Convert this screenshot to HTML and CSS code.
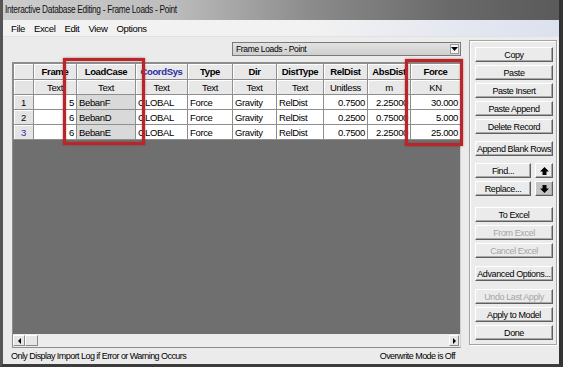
FILE: index.html
```html
<!DOCTYPE html>
<html lang="en">
<head>
  <meta charset="utf-8">
  <title>Interactive Database Editing - Frame Loads - Point</title>
  <link rel="stylesheet" href="styles.css">
</head>
<body>
  <div class="window">
    <div class="titlebar"><span class="title-text">Interactive Database Editing - Frame Loads - Point</span></div>
    <ul class="menubar">
      <li>File</li>
      <li>Excel</li>
      <li>Edit</li>
      <li>View</li>
      <li>Options</li>
    </ul>
    <div class="main">
      <div class="left">
        <div class="toolbar">
          <div class="combo">
            <span class="combo-text">Frame Loads - Point</span>
            <span class="combo-btn">
              <svg width="7" height="4" viewBox="0 0 7 4"><path d="M0 0H7L3.5 4Z" fill="#000"/></svg>
            </span>
          </div>
        </div>
        <div class="grid-box">
          <table class="grid">
            <colgroup>
              <col style="width:20px"><col style="width:43px"><col style="width:59px"><col style="width:52px"><col style="width:45px">
              <col style="width:44px"><col style="width:47px"><col style="width:44px"><col style="width:43px"><col style="width:50px">
            </colgroup>
            <tr class="head">
              <th class="corner"></th><th>Frame</th><th>LoadCase</th><th class="key">CoordSys</th><th>Type</th>
              <th>Dir</th><th>DistType</th><th>RelDist</th><th>AbsDist</th><th>Force</th>
            </tr>
            <tr class="units">
              <th class="corner"></th><td>Text</td><td>Text</td><td>Text</td><td>Text</td>
              <td>Text</td><td>Text</td><td>Unitless</td><td>m</td><td>KN</td>
            </tr>
            <tr>
              <th class="rownum">1</th><td class="num">5</td><td class="sel">BebanF</td><td>GLOBAL</td><td>Force</td>
              <td>Gravity</td><td>RelDist</td><td class="num">0.7500</td><td class="num">2.25000</td><td class="num">30.000</td>
            </tr>
            <tr>
              <th class="rownum">2</th><td class="num">6</td><td class="sel">BebanD</td><td>GLOBAL</td><td>Force</td>
              <td>Gravity</td><td>RelDist</td><td class="num">0.2500</td><td class="num">0.75000</td><td class="num">5.000</td>
            </tr>
            <tr>
              <th class="rownum current">3</th><td class="num">6</td><td class="sel">BebanE</td><td>GLOBAL</td><td>Force</td>
              <td>Gravity</td><td>RelDist</td><td class="num">0.7500</td><td class="num">2.25000</td><td class="num">25.000</td>
            </tr>
          </table>
          <div class="grid-empty"></div>
          <div class="hscroll">
            <span class="sb-btn">
              <svg width="3" height="6" viewBox="0 0 3 6"><path d="M3 0V6L0 3Z" fill="#000"/></svg>
            </span>
            <span class="sb-thumb"></span>
            <span class="sb-track"></span>
            <span class="sb-btn">
              <svg width="3" height="6" viewBox="0 0 3 6"><path d="M0 0V6L3 3Z" fill="#000"/></svg>
            </span>
          </div>
        </div>
      </div>
      <div class="panel">
        <button class="btn">Copy</button>
        <button class="btn">Paste</button>
        <button class="btn">Paste Insert</button>
        <button class="btn">Paste Append</button>
        <button class="btn">Delete Record</button>
        <button class="btn gap-7">Append Blank Rows</button>
        <div class="btn-row gap-7">
          <button class="btn find">Find...</button>
          <button class="btn arrow">
            <svg width="9" height="8" viewBox="0 0 9 8"><path d="M4.5 0L9 4.5H6.5V8H2.5V4.5H0Z" fill="#000"/></svg>
          </button>
        </div>
        <div class="btn-row">
          <button class="btn find">Replace...</button>
          <button class="btn arrow down">
            <svg width="9" height="8" viewBox="0 0 9 8"><path d="M4.5 8L9 3.5H6.5V0H2.5V3.5H0Z" fill="#000"/></svg>
          </button>
        </div>
        <button class="btn gap-11">To Excel</button>
        <button class="btn" disabled>From Excel</button>
        <button class="btn" disabled>Cancel Excel</button>
        <button class="btn gap-8">Advanced Options...</button>
        <button class="btn gap-8" disabled>Undo Last Apply</button>
        <button class="btn">Apply to Model</button>
        <button class="btn">Done</button>
      </div>
    </div>
    <div class="statusbar">
      <span>Only Display Import Log if Error or Warning Occurs</span>
      <span class="mode">Overwrite Mode is Off</span>
    </div>
    <div class="mark mark-loadcase"></div>
    <div class="mark mark-force"></div>
  </div>
</body>
</html>
```

FILE: styles.css
```css
*, *::before, *::after {
  margin: 0;
  padding: 0;
  box-sizing: border-box;
}

body {
  background-color: #FFFFFF;
  color: #000000;
  font-family: "Liberation Sans", Arial, sans-serif;
  font-size: 9px;
  letter-spacing: -0.35px;
}

.window {
  position: relative;
  display: flex;
  flex-direction: column;
  width: 563px;
  height: 367px;
  border-left: 3px solid #555555;
  border-right: 4px solid #333333;
  border-bottom: 3px solid #3C3C3C;
  background-color: #EBEBEB;
}

.titlebar {
  height: 20px;
  padding: 4px 0 0 2px;
  background: linear-gradient(90deg, #CDCDCD 0%, #BDBDBD 30%, #8C8C8C 55%, #6A6A6A 80%, #5A5A5A 100%);
  font-size: 10px;
  color: #111111;
}

.title-text {
  display: inline-block;
  transform: scaleX(0.83);
  transform-origin: left center;
  white-space: nowrap;
}

.menubar {
  display: flex;
  height: 17px;
  padding: 3px 0 0 8px;
  list-style: none;
  background: linear-gradient(90deg, #F2F2F2 55%, #DCE1EF 100%);
  border-bottom: 1px solid #E2E2E2;
  font-size: 9.5px;
}

.menubar li {
  margin-right: 9px;
}

.main {
  display: flex;
  height: 311px;
  padding-left: 9px;
}

.left {
  display: flex;
  flex-direction: column;
  width: 449px;
}

.toolbar {
  display: flex;
  justify-content: flex-end;
  padding-top: 5px;
  height: 25px;
}

.combo {
  display: flex;
  align-items: center;
  width: 229px;
  height: 14px;
  border: 1px solid #7A7A7A;
  background: linear-gradient(#E2E2E2, #CFCFCF);
  font-size: 8.5px;
}

.combo-text {
  flex: 1;
  padding-left: 3px;
}

.combo-btn {
  display: flex;
  align-items: center;
  justify-content: center;
  width: 9px;
  height: 10px;
  margin-right: 1px;
  background-color: #F4F4F4;
  border: 1px solid #9A9A9A;
}

.grid-box {
  display: flex;
  flex-direction: column;
  height: 286px;
  border: 1px solid #8C8C8C;
  border-right-color: #D0D0D0;
  overflow: hidden;
}

.grid {
  border-collapse: collapse;
  table-layout: fixed;
  width: 447px;
  background-color: #FFFFFF;
  font-size: 9.5px;
}

.grid th,
.grid td {
  height: 15px;
  padding: 0 2px;
  border: 1px solid #8E8E8E;
  font-weight: normal;
  white-space: nowrap;
  overflow: hidden;
}

.grid .head th {
  height: 16px;
  font-weight: bold;
  background-color: #E8E8E8;
  box-shadow: inset 1px 1px #FFFFFF;
}

.grid .head .key {
  color: #2B2BA6;
}

.grid .units td {
  text-align: center;
  background-color: #E8E8E8;
  box-shadow: inset 1px 1px #FFFFFF;
}

.grid .corner,
.grid .rownum {
  background-color: #E4E4E4;
  box-shadow: inset 1px 1px #FFFFFF;
  text-align: center;
}

.grid .current {
  color: #2B2BA6;
}

.grid .num {
  text-align: right;
}

.grid .sel {
  background-color: #D9D9D9;
}

.grid-empty {
  flex: 1;
  background-color: #6F6F6F;
}

.hscroll {
  display: flex;
  height: 13px;
  padding: 1px 0 1px 0;
  background-color: #ECECEC;
}

.sb-btn,
.sb-thumb {
  display: flex;
  align-items: center;
  justify-content: center;
  width: 12px;
  border: 1px solid;
  border-color: #FFFFFF #8A8A8A #8A8A8A #FFFFFF;
  background-color: #E6E6E6;
}

.sb-thumb {
  width: 13px;
}

.sb-track {
  flex: 1;
}

.hscroll .sb-btn:last-child {
  width: 10px;
  margin-right: 1px;
}

.panel {
  display: flex;
  flex-direction: column;
  gap: 3px;
  width: 88px;
  height: 305px;
  margin: 3px 0 0 8px;
  padding: 6px 0 0 5px;
  border: 1px solid #A4A4A4;
  box-shadow: inset 1px 1px #FFFFFF, 1px 1px #FFFFFF;
}

.btn {
  display: flex;
  align-items: center;
  justify-content: center;
  width: 78px;
  height: 15px;
  border: 1px solid;
  border-color: #FFFFFF #5E5E5E #5E5E5E #FFFFFF;
  box-shadow: inset -1px -1px #A8A8A8;
  background-color: #EBEBEB;
  color: #000000;
  font-family: inherit;
  font-size: 9px;
  letter-spacing: -0.4px;
  white-space: nowrap;
}

.btn:disabled {
  color: #A5A5A5;
}

.btn-row {
  display: flex;
  gap: 4px;
}

.btn.find {
  width: 56px;
}

.btn.arrow {
  width: 18px;
}

.btn.arrow.down {
  background-color: #C4C4C4;
}

.gap-7 {
  margin-top: 4px;
}

.gap-8 {
  margin-top: 5px;
}

.gap-11 {
  margin-top: 8px;
}

.statusbar {
  display: flex;
  align-items: center;
  height: 16px;
  padding: 0 104px 0 8px;
  font-size: 9px;
  letter-spacing: -0.55px;
}

.mode {
  margin-left: auto;
}

.mark {
  position: absolute;
  border: 3px solid #B8262B;
  box-shadow: 0 0 2px rgba(150, 20, 20, 0.6), inset 0 0 2px rgba(150, 20, 20, 0.5);
}

.mark-loadcase {
  left: 60px;
  top: 58px;
  width: 82px;
  height: 87px;
}

.mark-force {
  left: 402px;
  top: 59px;
  width: 58px;
  height: 87px;
}
```
